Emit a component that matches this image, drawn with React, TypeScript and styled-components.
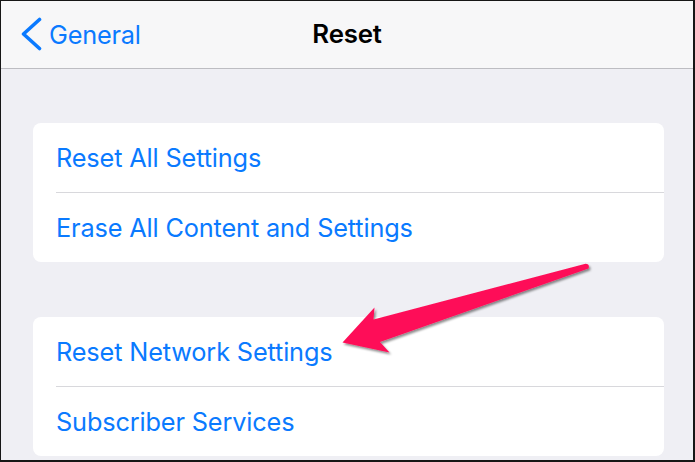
import React from "react";
import styled, { createGlobalStyle } from "styled-components";

const Global = createGlobalStyle`
  html, body { margin: 0; padding: 0; background: #111; }
  * { box-sizing: border-box; }
`;

const Frame = styled.div`
  position: relative;
  width: 695px;
  height: 462px;
  overflow: hidden;
  border-style: solid;
  border-color: #161616;
  border-width: 1px 2px 2px 1px;
  background: #efeff4;
  font-family: Inter, "Noto Sans", sans-serif;
  display: flex;
  flex-direction: column;
`;

const NavBar = styled.header`
  height: 68px;
  flex: none;
  background: #f7f7f8;
  border-bottom: 1px solid #bdbdc2;
  display: grid;
  grid-template-columns: 1fr auto 1fr;
  align-items: center;
  padding: 0 20px;
`;

const BackButton = styled.div`
  display: flex;
  align-items: center;
  gap: 6px;
  color: #0a7aff;
  font-size: 25.3px;
  letter-spacing: -0.2px;
  margin-top: -1px;
`;

const Title = styled.div`
  font-size: 25.8px;
  font-weight: 600;
  color: #000;
  letter-spacing: -0.2px;
  margin-top: -2px;
`;

const Content = styled.main`
  display: flex;
  flex-direction: column;
  gap: 55px;
  padding: 54px 29px 0 32px;
`;

const Card = styled.section`
  background: #fff;
  border-radius: 8px;
  overflow: hidden;
`;

const Row = styled.div<{ $last?: boolean }>`
  height: 69px;
  margin-left: 23px;
  display: flex;
  align-items: center;
  color: #0a7aff;
  font-size: 25.3px;
  letter-spacing: -0.15px;
  border-bottom: ${(p) => (p.$last ? "none" : "1px solid #d8d8dc")};
  box-sizing: content-box;
`;

const ArrowLayer = styled.svg`
  position: absolute;
  left: 0;
  top: 0;
  pointer-events: none;
`;

const Chevron = () => (
  <svg width="22" height="34" viewBox="0 0 22 34">
    <path
      d="M18.5 2.5 L2.5 17 L18.5 31.5"
      fill="none"
      stroke="#0a7aff"
      strokeWidth="3.6"
      strokeLinecap="round"
      strokeLinejoin="round"
    />
  </svg>
);

export default function App() {
  return (
    <>
      <Global />
      <Frame>
        <NavBar>
          <BackButton>
            <Chevron />
            General
          </BackButton>
          <Title>Reset</Title>
          <div />
        </NavBar>
        <Content>
          <Card>
            <Row>Reset All Settings</Row>
            <Row $last>Erase All Content and Settings</Row>
          </Card>
          <Card>
            <Row>Reset Network Settings</Row>
            <Row $last>Subscriber Services</Row>
          </Card>
        </Content>
        <ArrowLayer width="695" height="462" viewBox="0 0 695 462">
          <defs>
            <filter id="sh" x="-10%" y="-30%" width="130%" height="160%">
              <feDropShadow dx="1.5" dy="2" stdDeviation="1.2" floodColor="#000" floodOpacity="0.45" />
            </filter>
          </defs>
          <path
            d="M342.5 342.5 L374.5 307.5 L373.5 319.5 L585.5 263.8 Q590 264 588.5 268.5 L380 342 L389.5 352.5 Z"
            transform="translate(-1,-1)"
            fill="#fe1158"
            filter="url(#sh)"
            strokeLinejoin="round"
          />
        </ArrowLayer>
      </Frame>
    </>
  );
}
